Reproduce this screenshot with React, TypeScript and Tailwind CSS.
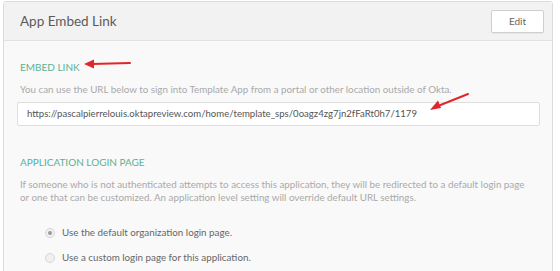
import React from 'react';

const Arrow: React.FC<{ className: string; w: number; h: number; d: string; head: string }> = ({ className, w, h, d, head }) => (
  <svg className={className} width={w} height={h} viewBox={`0 0 ${w} ${h}`}>
    <path d={d} stroke="#e0262b" strokeWidth="2" fill="none" strokeLinecap="round" />
    <polygon points={head} fill="#e0262b" />
  </svg>
);

const Radio: React.FC<{ checked?: boolean; label: string }> = ({ checked, label }) => (
  <label className="flex items-center gap-[7px] h-[25px]">
    <span className="w-[10px] h-[10px] rounded-full border border-[#d6d6d6] bg-[#f1f1f1] flex items-center justify-center">
      {checked && <span className="w-[4px] h-[4px] rounded-full bg-[#9a9a9a]" />}
    </span>
    <span className="text-[9.8px] text-[#666]">{label}</span>
  </label>
);

export default function App() {
  return (
    <div className="w-[560px] h-[271px] bg-white overflow-hidden pl-[3px] pt-[1px] font-['Lato',sans-serif]">
      <div className="w-[550px] h-[280px] border border-[#dcdcdc] rounded-t-[3px] bg-[#f9f9f9]">
        <div className="h-[39px] bg-[#f2f2f2] border-b border-[#e2e2e2] flex items-center justify-between pl-[16px] pr-[8px]">
          <h2 className="text-[13.5px] text-[#5b5b5b]">App Embed Link</h2>
          <button className="w-[53px] h-[23px] bg-white border border-[#cfcfcf] rounded-[2px] text-[10px] text-[#666] shadow-[0_1px_1px_rgba(0,0,0,0.05)]">
            Edit
          </button>
        </div>
        <div className="pl-[16px] pr-[14px] pt-[19px]">
          <div className="relative h-[14px] flex items-center">
            <h3 className="text-[10px] text-[#5bb193] uppercase">Embed Link</h3>
            <Arrow className="absolute left-[64px] top-[-1px]" w={48} h={10} d="M8 5 L46 4" head="0,5 10,0.5 10,9.5" />
          </div>
          <p className="mt-[9px] text-[9.8px] text-[#a9a9a9] leading-[12px]">
            You can use the URL below to sign into Template App from a portal or other location outside of Okta.
          </p>
          <div className="relative mt-[7px] -ml-[3px] w-[523px] h-[24px] bg-white border border-[#dedede] rounded-[2px] flex items-center px-[9px]">
            <span className="text-[9.6px] text-[#555]">
              https://pascalpierrelouis.oktapreview.com/home/template_sps/0oagz4zg7jn2fFaRt0h7/1179
            </span>
            <Arrow className="absolute left-[412px] top-[-11px]" w={40} h={20} d="M8 14 L38 2" head="0,18 8,8.5 11,16" />
          </div>
          <h3 className="mt-[29px] text-[10px] text-[#5bb193] uppercase leading-[14px]">Application Login Page</h3>
          <p className="mt-[9px] w-[512px] text-[9.8px] text-[#a9a9a9] leading-[13px]">
            If someone who is not authenticated attempts to access this application, they will be redirected to a default login page or one that can be customized. An application level setting will override default URL settings.
          </p>
          <div className="mt-[16px] pl-[25px] flex flex-col">
            <Radio checked label="Use the default organization login page." />
            <Radio label="Use a custom login page for this application." />
          </div>
        </div>
      </div>
    </div>
  );
}
